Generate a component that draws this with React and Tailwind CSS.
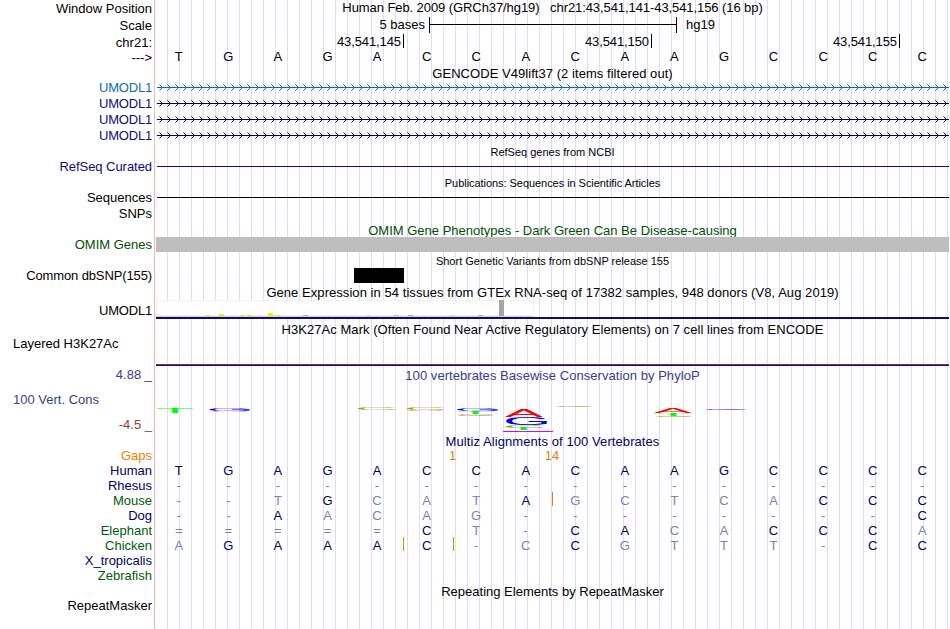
import React from 'react';
import clsx from 'clsx';

// side labels, top to bottom; `box` sets the height of each slot
const labels = [
  { text: 'Window Position', box: 'h-[18px] pt-px' },
  { text: 'Scale', box: 'h-[17px]' },
  { text: 'chr21:', box: 'h-[15px]' },
  { text: '--->', box: 'h-[30px]' },
  { text: 'UMODL1', box: 'h-4', color: 'text-[#0c6cac] tracking-[-0.2px]' },
  { text: 'UMODL1', box: 'h-4', color: 'text-[#0c0c78] tracking-[-0.2px]' },
  { text: 'UMODL1', box: 'h-4', color: 'text-[#0c0c78] tracking-[-0.2px]' },
  { text: 'UMODL1', box: 'h-[31px]', color: 'text-[#0c0c78] tracking-[-0.2px]' },
  { text: 'RefSeq Curated', box: 'h-[31px]', color: 'text-[#0c0c78] tracking-[-0.05px]' },
  { text: 'Sequences', box: 'h-4' },
  { text: 'SNPs', box: 'h-[31px]' },
  { text: 'OMIM Genes', box: 'h-[31px]', color: 'text-[#005000]' },
  { text: 'Common dbSNP(155)', box: 'h-[35px]', color: 'tracking-[-0.12px]' },
  { text: 'UMODL1', box: 'h-[33px]', color: 'tracking-[-0.2px]' },
  { text: 'Layered H3K27Ac', box: 'h-[31px]', left: true },
  { text: '4.88 _', box: 'h-[25px]', color: 'text-[#3c3c8c]' },
  { text: '100 Vert. Cons', box: 'h-[25px]', color: 'text-[#3c3c8c]', left: true },
  { text: '-4.5 _', box: 'h-[31px]', color: 'text-[#8c3c3c]' },
  { text: 'Gaps', box: 'h-[15px]', color: 'text-[#e68200]' },
  { text: 'Human', box: 'h-[15px]', color: 'text-[#000064]' },
  { text: 'Rhesus', box: 'h-[15px]', color: 'text-[#000064]' },
  { text: 'Mouse', box: 'h-[15px]', color: 'text-[#005a0a]' },
  { text: 'Dog', box: 'h-[15px]', color: 'text-[#000064]' },
  { text: 'Elephant', box: 'h-[15px]', color: 'text-[#005a0a]' },
  { text: 'Chicken', box: 'h-[15px]', color: 'text-[#005a0a]' },
  { text: 'X_tropicalis', box: 'h-[15px]', color: 'text-[#000064]' },
  { text: 'Zebrafish', box: 'h-[30px]', color: 'text-[#005a0a]' },
  { text: 'RepeatMasker', box: 'h-4' },
];

const sequence = 'TGAGACCACAAGCCCC';

// lower case = base differs from human, drawn in the light shade
const alignments = [
  { name: 'Human', bases: 'TGAGACCACAAGCCCC' },
  { name: 'Rhesus', bases: '----------------' },
  { name: 'Mouse', bases: '--tGcatAgctcaCCC', inserts: [397] },
  { name: 'Dog', bases: '--Aacag--------C' },
  { name: 'Elephant', bases: '=====Ct-CAcaCCCa' },
  { name: 'Chicken', bases: 'aGAAAC-cCgttt-CC', inserts: [248, 298] },
];

const gtexBars = {
  7: 'h-px bg-[#eeee00]',
  9: 'h-0.5 bg-[#eeee00]',
  12: 'h-px bg-[#eeee00]',
  13: 'h-px bg-[#eeee00]',
  16: 'h-[3px] bg-[#eeee00]',
  17: 'h-px bg-[#eeee00]',
  21: 'h-px bg-[#ee82ee]',
  30: 'h-px bg-[#eed5d2]',
  34: 'h-px bg-[#cdb79e]',
  36: 'h-px bg-[#9acd32]',
  42: 'h-px bg-[#b4eeb4]',
  46: 'h-px bg-[#cdaa8c]',
  49: 'h-4 bg-[#a6a6a6]',
};

const RED = '#ff0000';
const BLUE = '#0000ff';
const GREEN = '#00ff00';
const GOLD = '#a0a000';

// PhyloP logo letters: [letter, x, y, width, height, color]
const logo = [
  ['T', 1, 3, 36, 5, GREEN],
  ['G', 53, 3, 41, 3, BLUE],
  ['A', 54, 6, 38, 0.8, RED],
  ['C', 202, 3, 38, 2, GOLD],
  ['C', 251, 3, 38, 2, GOLD],
  ['A', 250, 5, 38, 0.9, RED],
  ['G', 301, 3, 41, 3, BLUE],
  ['T', 301, 6, 37, 3, GREEN],
  ['A', 301, 9, 38, 1, RED],
  ['C', 301, 10, 38, 1, GOLD],
  ['A', 349, 4, 38, 8, RED],
  ['G', 350, 12, 41, 8, BLUE],
  ['C', 350, 20, 38, 3, GOLD],
  ['T', 349, 23, 37, 2, GREEN],
  ['C', 400, 1, 38, 1, GOLD],
  ['A', 498, 3, 38, 5, RED],
  ['T', 499, 8, 37, 3, GREEN],
  ['C', 500, 11, 38, 1.5, GOLD],
  ['G', 549, 3, 41, 1.8, BLUE],
];

// ink box of the capitals at font size 100: [left, width, descent, height]
const ink = {
  A: [0.3, 66, 0, 69],
  C: [5, 64, 1, 71],
  G: [5, 66, 1, 71],
  T: [2.2, 56.6, 0, 69],
};

const LogoLetter = ({ item }) => {
  const [letter, x, y, w, h, color] = item;
  const [left, width, descent, height] = ink[letter];
  const sx = w / width;
  const sy = h / height;
  return (
    <text
      fontSize="100"
      fill={color}
      transform={`translate(${x - left * sx} ${y + h - descent * sy}) scale(${sx} ${sy})`}
    >
      {letter}
    </text>
  );
};

const Title = ({ children, className }) => (
  <div className={clsx('flex items-center justify-center whitespace-pre', className)}>{children}</div>
);

const GeneLine = ({ id, color }) => (
  <svg width="793" height="16" className="block" shapeRendering="crispEdges">
    <defs>
      <pattern id={id} x="1" y="0" width="8" height="16" patternUnits="userSpaceOnUse">
        <path d="M3 5h1v1h-1zM4 6h1v1h-1zM5 7h1v1h-1zM4 8h1v1h-1zM3 9h1v1h-1z" fill={color} />
        <path d="M2 4h1v1h-1zM2 10h1v1h-1z" fill={color} opacity="0.5" />
      </pattern>
    </defs>
    <rect x="1" y="0" width="792" height="16" fill={`url(#${id})`} />
    <rect x="1" y="7" width="792" height="1" fill={color} />
  </svg>
);

const BaseRow = ({ bases, inserts = [], className, tone }) => (
  <div className={clsx('relative -ml-0.5 grid w-[793px] grid-cols-16 items-center text-center', className)}>
    {bases.split('').map((b, i) => {
      const faded = b === '-' || b === '=' || b !== b.toUpperCase();
      return (
        <span key={i} className={faded ? 'text-[#8080b1]' : tone}>
          {b.toUpperCase()}
        </span>
      );
    })}
    {inserts.map((x) => (
      <i key={x} className="absolute -top-px h-3.5 w-px bg-[#e68200]" style={{ left: x + 1 }} />
    ))}
  </div>
);

const Position = ({ text, className }) => (
  <div className={clsx('flex h-full items-center justify-end border-r border-black pr-0.5', className)}>
    <span className="pt-0.5 tracking-[-0.1px]">{text}</span>
  </div>
);

const Labels = () => (
  <div className="flex w-[155px] shrink-0 flex-col border-r border-[#ffb4b4]">
    {labels.map((l, i) => (
      <div
        key={i}
        className={clsx('shrink-0 leading-4 whitespace-pre', l.box, l.color, l.left ? 'pl-[13px]' : 'pr-0.5 text-right')}
      >
        {l.text}
      </div>
    ))}
  </div>
);

const Tracks = () => (
  <div className="ml-px flex w-[793px] shrink-0 flex-col bg-[repeating-linear-gradient(to_right,transparent_0px,transparent_11px,#dcdcff_11px,#dcdcff_12px)]">
    <Title className="h-[15px] tracking-[-0.08px]">
      Human Feb. 2009 (GRCh37/hg19)   chr21:43,541,141-43,541,156 (16 bp)
    </Title>

    {/* scale bar */}
    <div className="flex h-[19px] items-center pt-px">
      <span className="w-[273px] pr-1 text-right">5 bases</span>
      <span className="flex h-4 w-[248px] items-center border-x border-black">
        <span className="h-px w-full -translate-y-px bg-black" />
      </span>
      <span className="pl-[9px]">hg19</span>
    </div>
    <div className="flex h-3.5 items-center">
      <Position text="43,541,145" className="w-[248px]" />
      <Position text="43,541,150" className="w-[248px]" />
      <Position text="43,541,155" className="w-[248px]" />
    </div>
    <BaseRow bases={sequence} className="h-[18px]" tone="text-black" />

    <Title className="h-[14px] pt-0.5 tracking-[0.05px]">GENCODE V49lift37 (2 items filtered out)</Title>
    <GeneLine id="arrows-0" color="#0c6cac" />
    <GeneLine id="arrows-1" color="#00006c" />
    <GeneLine id="arrows-2" color="#00006c" />
    <GeneLine id="arrows-3" color="#00006c" />

    <Title className="h-4 text-[11px]">RefSeq genes from NCBI</Title>
    <div className="ml-px flex h-[13px] items-center">
      <span className="h-px w-full bg-[#0c0c78]" />
    </div>
    <Title className="h-[19px] pt-px text-[11px] tracking-[-0.05px]">
      Publications: Sequences in Scientific Articles
    </Title>
    <div className="ml-px flex h-[11px] items-center">
      <span className="h-px w-full bg-black" />
    </div>

    <Title className="mt-5 h-[14px] pt-0.5 text-[#005000]">
      OMIM Gene Phenotypes - Dark Green Can Be Disease-causing
    </Title>
    <div className="h-[15px] bg-[#bebebe]" />
    <Title className="h-4 pt-0.5 text-[11px]">Short Genetic Variants from dbSNP release 155</Title>
    <div className="ml-[198px] h-[15px] w-[50px] bg-black" />

    <Title className="h-[17px] pt-0.5 tracking-[0.055px]">
      Gene Expression in 54 tissues from GTEx RNA-seq of 17382 samples, 948 donors (V8, Aug 2019)
    </Title>
    <div className="relative flex h-[17px] w-[378px] items-end gap-0.5 border-b border-[#d3d3d3] bg-white inset-shadow-[0_0_0_1px_#f2f2f2]">
      {Array.from({ length: 54 }, (_, i) => (
        <span key={i} className={clsx('w-[5px] shrink-0', gtexBars[i])} />
      ))}
    </div>
    <div className="h-0.5 bg-[#0c0c78]" />

    <Title className="h-[21px] tracking-[0.05px]">
      H3K27Ac Mark (Often Found Near Active Regulatory Elements) on 7 cell lines from ENCODE
    </Title>
    <div className="mt-6 h-0.5 border-t border-[#78287d] bg-[#1e1450]" />

    <Title className="h-[19px] tracking-[0.05px] text-[#3c3c8c]">
      100 vertebrates Basewise Conservation by PhyloP
    </Title>
    <svg width="793" height="28" className="mt-5 block">
      {logo.map((item, i) => (
        <LogoLetter key={i} item={item} />
      ))}
      <rect x="347" y="26" width="50" height="1" fill="#e600e6" />
    </svg>
    <Title className="mt-px h-[15px] tracking-[0.08px] text-[#000064]">Multiz Alignments of 100 Vertebrates</Title>

    {/* multiz */}
    <div className="-mt-px flex h-[15px] items-center text-[#e68200]">
      <span className="ml-[247px] w-[99px] text-center">1</span>
      <span className="w-[99px] pl-px text-center">14</span>
    </div>
    {alignments.map((row) => (
      <BaseRow key={row.name} bases={row.bases} inserts={row.inserts} className="h-[15px]" tone="text-[#000064]" />
    ))}

    <Title className="mt-[31px] h-4">Repeating Elements by RepeatMasker</Title>
  </div>
);

export default function App() {
  return (
    <div className="flex h-[629px] w-[950px] overflow-hidden bg-white font-['Liberation_Sans',Arial,sans-serif] text-[13px] leading-4 text-black">
      <Labels />
      <Tracks />
    </div>
  );
}
